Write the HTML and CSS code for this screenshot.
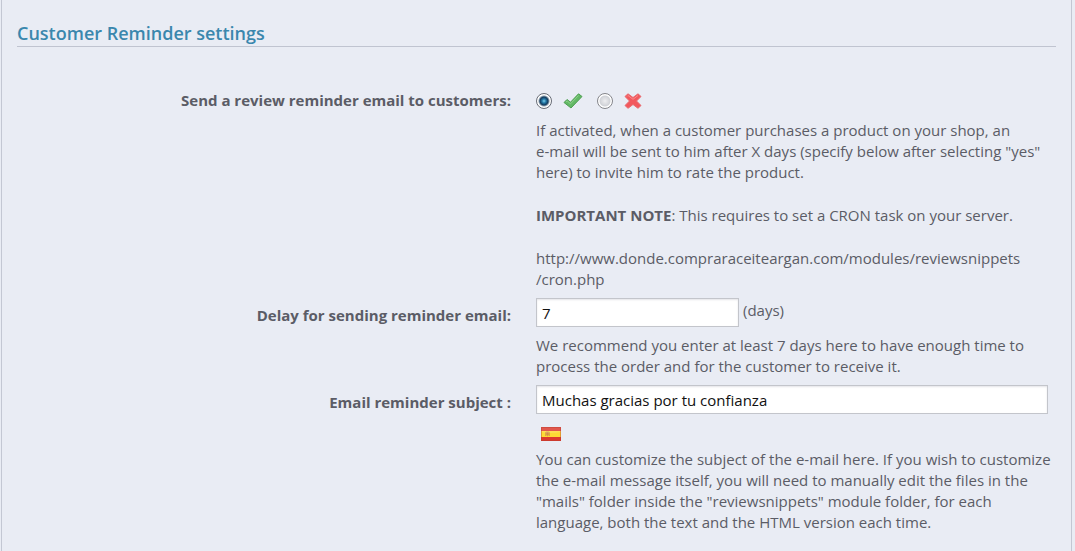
FILE: index.html
```html
<!DOCTYPE html>
<html lang="en">
<head>
    <meta charset="UTF-8">
    <meta name="viewport" content="width=device-width, initial-scale=1.0">
    <title>Customer Reminder settings</title>
    <link rel="stylesheet" href="styles.css">
</head>
<body>
    <main class="panel">
        <h3>Customer Reminder settings</h3>
        <form>
            <div class="row" role="radiogroup" aria-labelledby="reminderLabel">
                <span class="row-label" id="reminderLabel">Send a review reminder email to customers:</span>
                <div class="field">
                    <div class="options">
                        <input type="radio" id="reminderOn" name="reminder" value="1" checked>
                        <label for="reminderOn" aria-label="Yes">
                            <svg width="20" height="16" viewBox="0 0 20 16">
                                <path d="M1 9.500 4 6.500 7.500 9.200 15.500 .8 19 3.500 8 15z" fill="#62b865" stroke="#4f9f52" stroke-linejoin="round"/>
                                <path d="M3 9 4.200 8 7.500 10.800 15.700 2.400" fill="none" stroke="#8fd38a"/>
                            </svg>
                        </label>
                        <input type="radio" id="reminderOff" name="reminder" value="0">
                        <label for="reminderOff" aria-label="No">
                            <svg width="18" height="16" viewBox="0 0 18 16">
                                <path d="M4 .8 9 4.500 14 .8 17 3.500 12.500 8 17 12.500 14 15.300 9 11.500 4 15.300 1 12.500 5.500 8 1 3.500z" fill="#f2585d" stroke="#e8696d" stroke-linejoin="round"/>
                                <path d="M3 3.500 4 2.500 9 6.300 14 2.500" fill="none" stroke="#fa8a8c"/>
                            </svg>
                        </label>
                    </div>
                    <div class="help">
                        <p>If activated, when a customer purchases a product on your shop, an<br>e-mail will be sent to him after X days (specify below after selecting "yes" here) to invite him to rate the product.</p>
                        <p><b>IMPORTANT NOTE</b>: This requires to set a CRON task on your server.</p>
                        <p>http://www.donde.compraraceiteargan.com/modules/reviewsnippets<wbr>/cron.php</p>
                    </div>
                </div>
            </div>
            <div class="row">
                <label class="row-label input-label" for="delay">Delay for sending reminder email:</label>
                <div class="field">
                    <div class="input-line">
                        <input type="text" class="short" id="delay" value="7">
                        <span>(days)</span>
                    </div>
                    <div class="help">
                        <p>We recommend you enter at least 7 days here to have enough time to process the order and for the customer to receive it.</p>
                    </div>
                </div>
            </div>
            <div class="row">
                <label class="row-label input-label" for="subject">Email reminder subject :</label>
                <div class="field">
                    <div class="input-line">
                        <input type="text" class="long" id="subject" value="Muchas gracias por tu confianza">
                    </div>
                    <svg class="flag" width="20" height="14" viewBox="0 0 20 14" role="img" aria-label="Español">
                        <rect width="20" height="14" fill="#dc3a2e"/>
                        <rect y="4" width="20" height="6" fill="#fddb35"/>
                        <path d="M5 4.500h3v3.500l-1.500 1.500L5 8z" fill="#dd9a48"/>
                        <path d="M6.500 5v3M4.500 5v4M8.500 5v4" stroke="#c88a44" stroke-width=".6"/>
                        <path d="M0 0h20v5Q9 7 0 5z" fill="#fff" opacity=".15"/>
                        <rect x=".5" y=".5" width="19" height="13" fill="none" stroke="#b43c30" opacity=".4"/>
                    </svg>
                    <div class="help">
                        <p>You can customize the subject of the e-mail here. If you wish to customize the e-mail message itself, you will need to manually edit the files in the "mails" folder inside the "reviewsnippets" module folder, for each language, both the text and the HTML version each time.</p>
                    </div>
                </div>
            </div>
        </form>
    </main>
</body>
</html>
```
FILE: styles.css
```css
* {
    box-sizing: border-box;
}

body {
    margin: 0;
    padding: 0 3px 0 1px;
    font-family: "Open Sans", sans-serif;
    font-size: 15px;
    line-height: 21px;
    background-color: #e9ecf4;
    color: #5b5c66;
}

.panel {
    min-height: 100vh;
    padding: 22px 15px 15px;
    border: solid #c3c7d3;
    border-width: 0 1px;
}

h3 {
    margin: 0 0 43px;
    padding-bottom: 2px;
    border-bottom: 1px solid #c0c4d0;
    font-size: 18px;
    font-weight: 600;
    line-height: 22px;
    color: #3a87ad;
}

.row {
    display: grid;
    grid-template-columns: 19fr 20fr;
    column-gap: 25px;
    margin-bottom: 8px;
}

.row-label {
    text-align: right;
    font-weight: bold;
}

.input-label {
    padding-top: 7px;
}

.options {
    display: flex;
    align-items: center;
    height: 22px;
    margin-bottom: 8px;
}

.options label {
    display: flex;
    margin: 0 14px 0 11px;
}

input[type="radio"] {
    appearance: none;
    width: 16px;
    height: 16px;
    margin: 0;
    border: 1px solid #85868b;
    border-radius: 50%;
    background: radial-gradient(circle at 50% 50%, #eeeef0 0, #d0d2d7 5px, #fff 6px);
}

input[type="radio"]:checked {
    border-color: #686c76;
    background: radial-gradient(circle at 50% 50%, #7fd0ec 0, #2379a8 2px, #143a5c 4px, #fff 6px);
}

.help p {
    margin: 0;
}

.help p + p {
    margin-top: 22px;
}

.input-line {
    display: flex;
    gap: 4px;
    margin-bottom: 8px;
}

.input-line span {
    padding-top: 2px;
}

input[type="text"] {
    height: 29px;
    padding: 0 5px;
    border: 1px solid #c3c5cb;
    background-color: #fff;
    box-shadow: inset 0 1px 2px #e4e4e8;
    font: inherit;
    color: #111;
}

.short {
    width: 203px;
}

.long {
    width: 512px;
    max-width: 100%;
}

.flag {
    display: block;
    margin: 13px 0 8px 5px;
}
```
